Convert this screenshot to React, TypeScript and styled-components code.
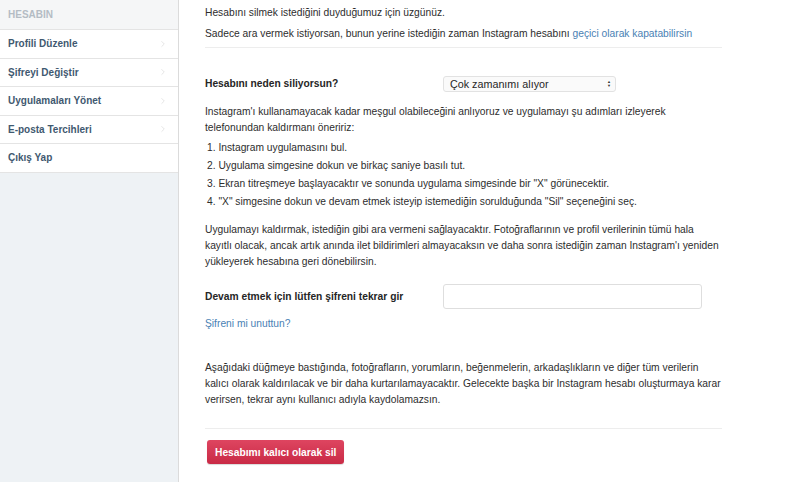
import styled, { createGlobalStyle } from "styled-components";
import { ChevronRight } from "lucide-react";

const GlobalStyle = createGlobalStyle`
    html, body {
        margin: 0;
        padding: 0;
        background: #ffffff;
    }
    body {
        font-family: "Liberation Sans", Arial, sans-serif;
        color: #262626;
        -webkit-font-smoothing: antialiased;
    }
`;

const menuItems = [
    { label: "Profili Düzenle", arrow: true },
    { label: "Şifreyi Değiştir", arrow: true },
    { label: "Uygulamaları Yönet", arrow: true },
    { label: "E-posta Tercihleri", arrow: true },
    { label: "Çıkış Yap", arrow: false },
];

const steps = [
    "Instagram uygulamasını bul.",
    "Uygulama simgesine dokun ve birkaç saniye basılı tut.",
    'Ekran titreşmeye başlayacaktır ve sonunda uygulama simgesinde bir "X" görünecektir.',
    '"X" simgesine dokun ve devam etmek isteyip istemediğin sorulduğunda "Sil" seçeneğini seç.',
];

export default function App() {
    return (
        <Page>
            <GlobalStyle />
            <Sidebar>
                <SideHeader>HESABIN</SideHeader>
                {menuItems.map((item) => (
                    <SideItem key={item.label}>
                        {item.label}
                        {item.arrow && <ChevronRight size={10} strokeWidth={1.5} />}
                    </SideItem>
                ))}
            </Sidebar>
            <Content>
                <Text>Hesabını silmek istediğini duyduğumuz için üzgünüz.</Text>
                <Text $top={5}>
                    Sadece ara vermek istiyorsan, bunun yerine istediğin zaman Instagram
                    hesabını <Link>geçici olarak kapatabilirsin</Link>
                </Text>
                <Divider $top={5} />

                <FormRow $top={28}>
                    <Label>Hesabını neden siliyorsun?</Label>
                    <Select>
                        Çok zamanımı alıyor
                        <Arrows>
                            <span>▲</span>
                            <span>▼</span>
                        </Arrows>
                    </Select>
                </FormRow>

                <Text $top={12}>
                    Instagram'ı kullanamayacak kadar meşgul olabileceğini anlıyoruz ve
                    uygulamayı şu adımları izleyerek telefonundan kaldırmanı öneririz:
                </Text>
                <Steps>
                    {steps.map((s, i) => (
                        <li key={i}>
                            {i + 1}. {s}
                        </li>
                    ))}
                </Steps>

                <Text $top={11}>
                    Uygulamayı kaldırmak, istediğin gibi ara vermeni sağlayacaktır.
                    Fotoğraflarının ve profil verilerinin tümü hala kayıtlı olacak, ancak
                    artık anında ilet bildirimleri almayacaksın ve daha sonra istediğin
                    zaman Instagram'ı yeniden yükleyerek hesabına geri dönebilirsin.
                </Text>

                <FormRow $top={14}>
                    <Label>Devam etmek için lütfen şifreni tekrar gir</Label>
                    <Input type="password" />
                </FormRow>
                <Text $top={7}>
                    <Link>Şifreni mi unuttun?</Link>
                </Text>

                <Text $top={28}>
                    Aşağıdaki düğmeye bastığında, fotoğrafların, yorumların, beğenmelerin,
                    arkadaşlıkların ve diğer tüm verilerin kalıcı olarak kaldırılacak ve
                    bir daha kurtarılamayacaktır. Gelecekte başka bir Instagram hesabı
                    oluşturmaya karar verirsen, tekrar aynı kullanıcı adıyla
                    kaydolamazsın.
                </Text>
                <Divider $top={20} />
                <DeleteButton>Hesabımı kalıcı olarak sil</DeleteButton>
            </Content>
        </Page>
    );
}

const Page = styled.div`
    display: flex;
    min-height: 482px;
    width: 795px;
`;

const Sidebar = styled.div`
    width: 179px;
    flex-shrink: 0;
    background: #eef2f5;
    border-right: 1px solid #dbdbdb;
    box-sizing: border-box;
`;

const SideHeader = styled.div`
    height: 29px;
    display: flex;
    align-items: center;
    padding-left: 8px;
    background: #f5f6f7;
    color: #b4bcc4;
    font-size: 10px;
    font-weight: 700;
    border-bottom: 1px solid #e4e4e4;
`;

const SideItem = styled.div`
    height: 27.5px;
    display: flex;
    align-items: center;
    justify-content: space-between;
    padding: 0 10px 0 8px;
    background: #ffffff;
    color: #3f5970;
    font-size: 10px;
    font-weight: 700;
    border-bottom: 1px solid #e4e4e4;
    svg {
        color: #d6d6d6;
    }
`;

const Content = styled.div`
    width: 517px;
    padding: 5px 0 0 26px;
    font-size: 10.25px;
    line-height: 16px;
`;

const Text = styled.p<{ $top?: number }>`
    margin: ${(p) => p.$top ?? 0}px 0 0;
    color: #2d2d2d;
`;

const Link = styled.span`
    color: #4a81b4;
`;

const Divider = styled.hr<{ $top?: number }>`
    margin: ${(p) => p.$top ?? 0}px 0 0;
    border: none;
    border-top: 1px solid #ededed;
`;

const FormRow = styled.div<{ $top?: number }>`
    display: flex;
    align-items: center;
    margin-top: ${(p) => p.$top ?? 0}px;
`;

const Label = styled.div`
    width: 238px;
    font-weight: 700;
    color: #262626;
`;

const Select = styled.div`
    width: 173px;
    height: 16px;
    box-sizing: border-box;
    display: flex;
    align-items: center;
    justify-content: space-between;
    padding: 0 4px 0 6px;
    border: 1px solid #e2e2e2;
    border-radius: 3px;
    background: #fafafa;
    font-size: 10.75px;
    color: #262626;
`;

const Arrows = styled.span`
    display: flex;
    flex-direction: column;
    font-size: 4px;
    line-height: 4px;
    color: #333;
`;

const Steps = styled.ol`
    list-style: none;
    margin: 3px 0 0;
    padding: 0 0 0 2px;
    li {
        line-height: 18px;
        color: #2d2d2d;
    }
`;

const Input = styled.input`
    width: 259px;
    height: 25px;
    box-sizing: border-box;
    border: 1px solid #dedede;
    border-radius: 3px;
    background: #ffffff;
    outline: none;
`;

const DeleteButton = styled.button`
    margin-top: 11px;
    margin-left: 2px;
    height: 24px;
    padding: 0 8px;
    border: none;
    border-radius: 3px;
    background: linear-gradient(#de4560, #c92a46);
    color: #ffffff;
    font-family: "Liberation Sans", Arial, sans-serif;
    font-size: 10.25px;
    font-weight: 700;
    box-shadow: 0 1px 1px rgba(0, 0, 0, 0.15);
`;
